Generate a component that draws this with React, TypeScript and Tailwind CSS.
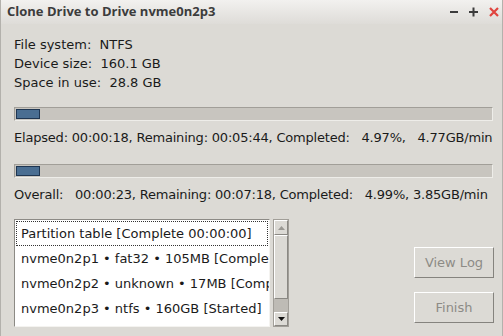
import React from "react";

const font = { fontFamily: '"DejaVu Sans", "Liberation Sans", sans-serif' };

function Bar() {
  return (
    <div className="h-[14px] w-[479px] border border-[#a19e98] bg-[#c8c5bf] border-b-[#eeede9] border-r-[#eeede9] p-[1px]">
      <div className="h-full w-[24px] border border-[#1f3652] bg-[#4a6e92]" />
    </div>
  );
}

function Btn({ label }: { label: string }) {
  return (
    <div className="flex h-[31px] w-[80px] items-center justify-center border border-t-white border-l-white border-b-[#85837e] border-r-[#85837e] bg-[#dcdad5] text-[13px] text-[#8d8b86]">
      {label}
    </div>
  );
}

export default function App() {
  const items = [
    "Partition table [Complete 00:00:00]",
    "nvme0n2p1 • fat32 • 105MB [Complete 00:00:01]",
    "nvme0n2p2 • unknown • 17MB [Complete 00:00:00]",
    "nvme0n2p3 • ntfs • 160GB [Started]",
  ];
  return (
    <div className="h-[336px] w-[503px] overflow-hidden bg-[#dcdad5] border-x border-[#b3b1ac] text-[#1a1a1a]" style={font}>
      <div className="flex h-[24px] items-center bg-gradient-to-b from-[#f2f1ef] to-[#dedcd8] pl-[6px] pr-[3px]">
        <div className="text-[13px] font-bold text-[#3c3c3c]" style={{ fontFamily: '"Open Sans", "DejaVu Sans", sans-serif' }}>
          Clone Drive to Drive nvme0n2p3
        </div>
        <div className="ml-auto flex items-center gap-[11px] text-[#3c3c3c]">
          <svg width="8" height="10" viewBox="0 0 8 10"><rect x="0" y="4" width="8" height="2" fill="#3c3c3c" /></svg>
          <svg width="9" height="10" viewBox="0 0 9 10"><rect x="0" y="4" width="9" height="2" fill="#3c3c3c" /><rect x="3.5" y="0.5" width="2" height="9" fill="#3c3c3c" /></svg>
          <svg width="10" height="10" viewBox="0 0 10 10"><path d="M1 1 L9 9 M9 1 L1 9" stroke="#e0443e" strokeWidth="2.2" /></svg>
        </div>
      </div>
      <div className="pl-[13px] pt-[11px] text-[13px]">
        <div className="leading-[19px]">
          <div className="whitespace-pre">File system:  NTFS</div>
          <div className="whitespace-pre">Device size:  160.1 GB</div>
          <div className="whitespace-pre">Space in use:  28.8 GB</div>
        </div>
        <div className="mt-[15px]"><Bar /></div>
        <div className="mt-[7px] whitespace-pre leading-[19px] tracking-[-0.2px]">Elapsed: 00:00:18, Remaining: 00:05:44, Completed:   4.97%,   4.77GB/min</div>
        <div className="mt-[17px]"><Bar /></div>
        <div className="mt-[7px] whitespace-pre leading-[19px] tracking-[-0.2px]">Overall:   00:00:23, Remaining: 00:07:18, Completed:   4.99%, 3.85GB/min</div>
        <div className="mt-[15px] flex">
          <div className="h-[108px] w-[256px] overflow-hidden border border-[#8c8a85] border-b-[#f4f3f0] border-r-[#f4f3f0] bg-white p-[1px]">
            {items.map((t, i) => (
              <div
                key={i}
                className={"h-[25px] whitespace-nowrap pl-[4px] leading-[24px] " + (i === 0 ? "border border-dotted border-[#333]" : "border border-transparent")}
              >
                {t}
              </div>
            ))}
          </div>
          <div className="ml-[3px] flex h-[108px] w-[16px] flex-col border border-[#a19e98] bg-[#bebbb5]">
            <div className="flex h-[15px] items-center justify-center border border-t-white border-l-white border-b-[#8a8883] border-r-[#8a8883] bg-[#dcdad5]">
              <svg width="7" height="4" viewBox="0 0 7 4"><path d="M0 4 L3.5 0 L7 4Z" fill="#9a9893" /></svg>
            </div>
            <div className="h-[64px] border border-t-white border-l-white border-b-[#8a8883] border-r-[#8a8883] bg-[#dcdad5]" />
            <div className="flex-1" />
            <div className="flex h-[14px] items-center justify-center border border-t-white border-l-white border-b-[#8a8883] border-r-[#8a8883] bg-[#dcdad5]">
              <svg width="7" height="4" viewBox="0 0 7 4"><path d="M0 0 L7 0 L3.5 4Z" fill="#111" /></svg>
            </div>
          </div>
          <div className="ml-auto mr-[8px] flex flex-col pt-[28px] gap-[14px]">
            <Btn label="View Log" />
            <Btn label="Finish" />
          </div>
        </div>
      </div>
    </div>
  );
}
